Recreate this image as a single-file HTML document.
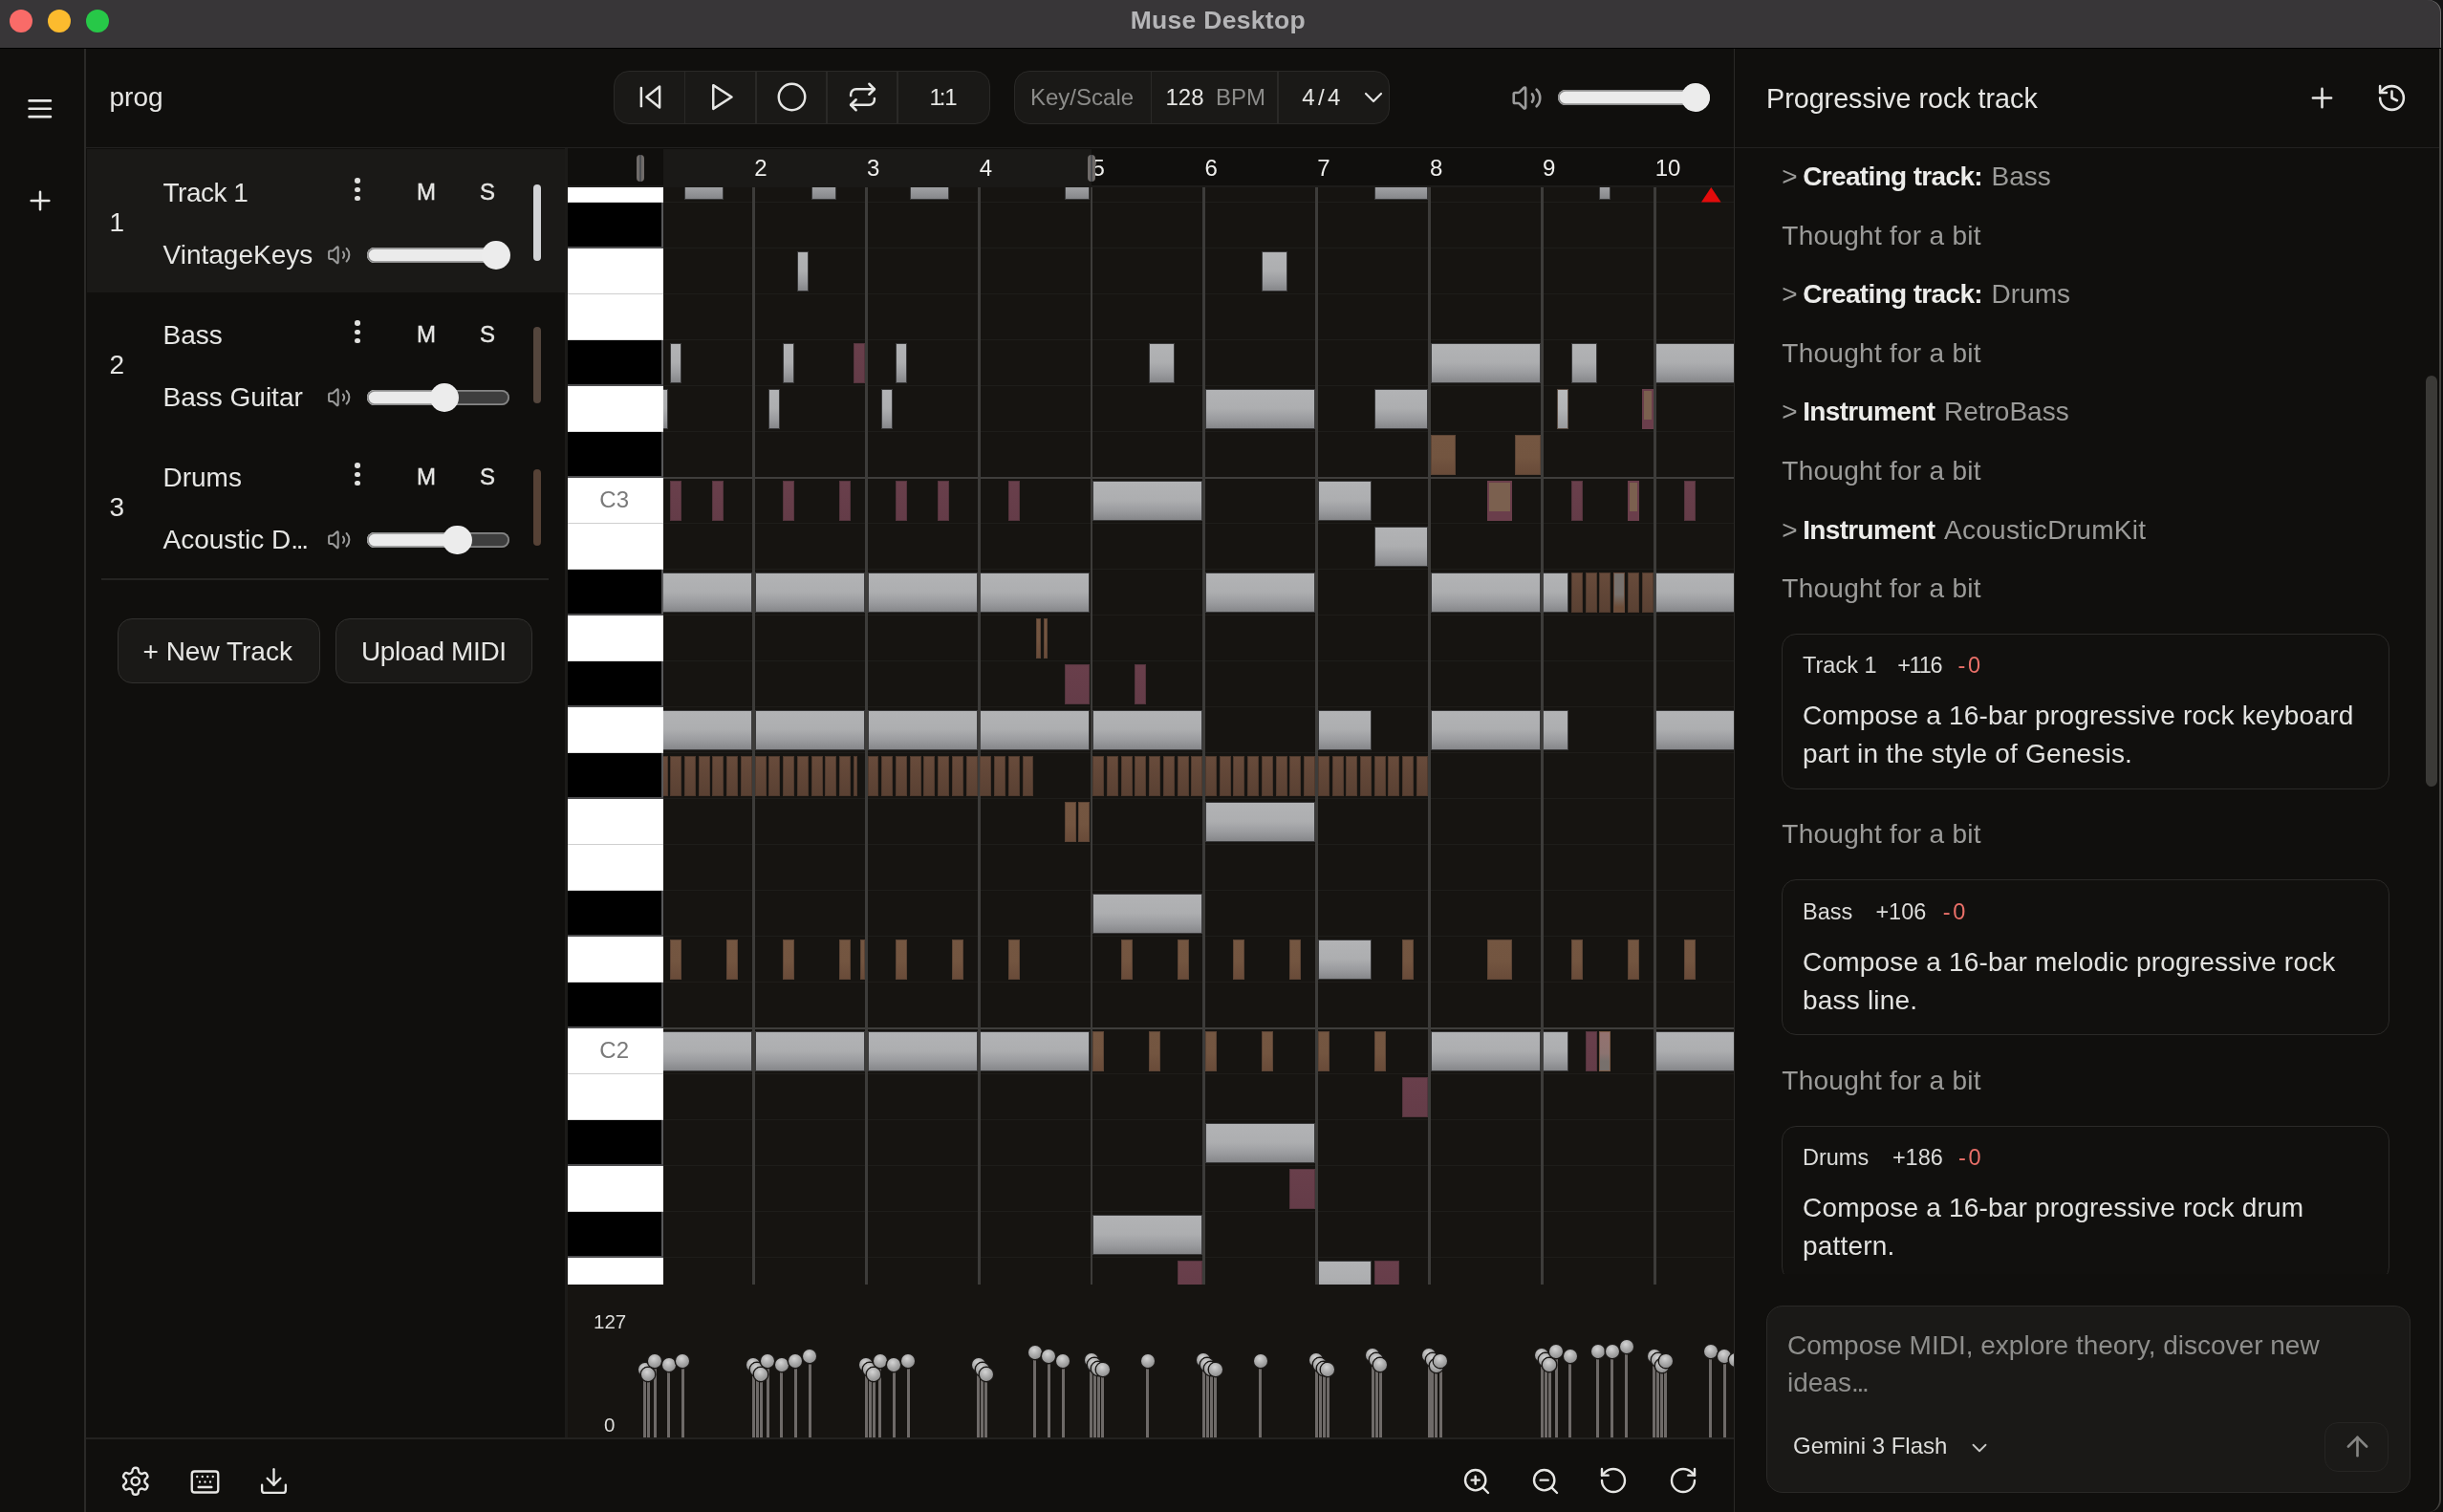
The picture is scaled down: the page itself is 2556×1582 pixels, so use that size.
<!DOCTYPE html>
<html><head><meta charset="utf-8"><title>Muse Desktop</title>
<style>
html,body{margin:0;padding:0;}
body{width:2556px;height:1582px;overflow:hidden;background:#100f0d;font-family:"Liberation Sans", sans-serif;position:relative;}
div,svg{box-sizing:border-box;}
.n{position:absolute;height:39.3px;}
.g{background:linear-gradient(to bottom,#b2b3b5 0%,#adaeb0 48%,#9b9c9f 76%,#86878a 100%);box-shadow:0 0 0 1px rgba(70,70,72,.75);}
.m{background:linear-gradient(to bottom,#693f4b,#643c48);box-shadow:0 0 0 1px rgba(100,60,72,.8);}
.b{background:linear-gradient(to bottom,#684b3b,#5a4133);box-shadow:0 0 0 1px rgba(92,66,52,.8);}
.c{background:linear-gradient(to bottom,#775643,#684a3a);box-shadow:0 0 0 1px rgba(108,78,60,.8);}
.d{background:linear-gradient(to bottom,#745641 0%,#735540 55%,#694b39 100%);box-shadow:0 0 0 1px rgba(110,80,62,.8);}
.x{background:#7b604f;box-shadow:inset 0 0 0 1px #6a3e4b,inset 0 -9px 0 0 #6a3e4b,0 0 0 1px #6a3e4b;}
.l{background:linear-gradient(to bottom,#b9babc 0%,#b2b3b5 50%,#999a9d 100%);box-shadow:0 0 0 1px rgba(120,100,88,.7);}
.stem{position:absolute;width:3px;background:#6e6a68;}
.head{position:absolute;width:14px;height:14px;border-radius:50%;background:radial-gradient(circle at 42% 32%,#d4d4d4 0%,#adadad 42%,#7e7e7e 100%);box-shadow:0 0 0 1.5px #1a1816;}
</style></head><body><div id="app" style="position:absolute;left:0;top:0;width:2556px;height:1582px;will-change:transform;">

<div style="position:absolute;left:0.00px;top:0.00px;width:2556.00px;height:51.00px;background:#141414;"></div>
<div style="position:absolute;left:0.00px;top:0.00px;width:2554.00px;height:50.00px;background:#383638;border-top-right-radius:13px;box-shadow:inset -1px 0 0 #6e6c6c;"></div>
<div style="position:absolute;left:0.00px;top:49.70px;width:2554.00px;height:1.50px;background:#000;"></div>
<div style="position:absolute;left:9.80px;top:9.80px;width:24.20px;height:24.20px;border-radius:50%;background:#f96b68;"></div>
<div style="position:absolute;left:49.90px;top:9.80px;width:24.20px;height:24.20px;border-radius:50%;background:#fcbb2e;"></div>
<div style="position:absolute;left:89.90px;top:9.80px;width:24.20px;height:24.20px;border-radius:50%;background:#27c848;"></div>
<div style="position:absolute;top:7.57px;font-size:26.5px;line-height:26.5px;color:#b5b5b7;white-space:nowrap;font-weight:bold;letter-spacing:0.3px;left:974.30px;width:600px;text-align:center;">Muse Desktop</div>
<div style="position:absolute;left:88.20px;top:51.00px;width:1.40px;height:1531.00px;background:#2a2927;"></div>
<svg style="position:absolute;left:25.25px;top:97.25px" width="33.5" height="33.5" viewBox="0 0 24 24" fill="none" stroke="#e6e6e4" stroke-width="1.9" stroke-linecap="round" stroke-linejoin="round"><path d="M4 12h16M4 6h16M4 18h16"/></svg>
<svg style="position:absolute;left:26.00px;top:194.40px" width="32" height="32" viewBox="0 0 24 24" fill="none" stroke="#e6e6e4" stroke-width="1.9" stroke-linecap="round" stroke-linejoin="round"><path d="M5 12h14M12 5v14"/></svg>
<div style="position:absolute;left:90.00px;top:153.50px;width:1724.00px;height:1.50px;background:#222120;"></div>
<div style="position:absolute;top:88.30px;font-size:28px;line-height:28px;color:#e6e6e4;white-space:nowrap;left:114.50px;">prog</div>
<div style="position:absolute;left:642.00px;top:74.00px;width:394.00px;height:56.00px;background:#1a1917;border:1.5px solid #2a2927;border-radius:16px;"></div>
<div style="position:absolute;left:715.75px;top:75.00px;width:1.50px;height:54.00px;background:#2a2927;"></div>
<div style="position:absolute;left:790.25px;top:75.00px;width:1.50px;height:54.00px;background:#2a2927;"></div>
<div style="position:absolute;left:864.25px;top:75.00px;width:1.50px;height:54.00px;background:#2a2927;"></div>
<div style="position:absolute;left:938.25px;top:75.00px;width:1.50px;height:54.00px;background:#2a2927;"></div>
<svg style="position:absolute;left:663.50px;top:85.10px" width="33" height="33" viewBox="0 0 24 24" fill="none" stroke="#e6e6e4" stroke-width="1.8" stroke-linecap="round" stroke-linejoin="round"><polygon points="19 20 9 12 19 4 19 20"/><line x1="5" x2="5" y1="19" y2="5"/></svg>
<svg style="position:absolute;left:737.50px;top:85.10px" width="33" height="33" viewBox="0 0 24 24" fill="none" stroke="#e6e6e4" stroke-width="1.8" stroke-linecap="round" stroke-linejoin="round"><polygon points="6 3 20 12 6 21 6 3"/></svg>
<svg style="position:absolute;left:811.50px;top:85.10px" width="33" height="33" viewBox="0 0 24 24" fill="none" stroke="#e6e6e4" stroke-width="1.8" stroke-linecap="round" stroke-linejoin="round"><circle cx="12" cy="12" r="10"/></svg>
<svg style="position:absolute;left:885.50px;top:85.10px" width="33" height="33" viewBox="0 0 24 24" fill="none" stroke="#e6e6e4" stroke-width="1.8" stroke-linecap="round" stroke-linejoin="round"><path d="m17 2 4 4-4 4"/><path d="M3 11v-1a4 4 0 0 1 4-4h14"/><path d="m7 22-4-4 4-4"/><path d="M21 13v1a4 4 0 0 1-4 4H3"/></svg>
<div style="position:absolute;top:89.68px;font-size:24px;line-height:24px;color:#e6e6e4;white-space:nowrap;left:972.60px;"><span style="letter-spacing:-3.1px">1</span><span style="letter-spacing:-1.2px">:</span>1</div>
<div style="position:absolute;left:1060.50px;top:74.00px;width:393.50px;height:56.00px;background:#1a1917;border:1.5px solid #2a2927;border-radius:16px;"></div>
<div style="position:absolute;left:1203.75px;top:75.00px;width:1.50px;height:54.00px;background:#2a2927;"></div>
<div style="position:absolute;left:1336.25px;top:75.00px;width:1.50px;height:54.00px;background:#2a2927;"></div>
<div style="position:absolute;top:89.68px;font-size:24px;line-height:24px;color:#8c8c8a;white-space:nowrap;left:1078.00px;">Key/Scale</div>
<div style="position:absolute;top:89.68px;font-size:24px;line-height:24px;color:#e6e6e4;white-space:nowrap;left:1219.50px;">128</div>
<div style="position:absolute;top:89.68px;font-size:24px;line-height:24px;color:#8c8c8a;white-space:nowrap;left:1272.00px;">BPM</div>
<div style="position:absolute;top:89.68px;font-size:24px;line-height:24px;color:#e6e6e4;white-space:nowrap;letter-spacing:3.4px;left:1362.30px;">4/4</div>
<svg style="position:absolute;left:1420.60px;top:86.00px" width="32" height="32" viewBox="0 0 24 24" fill="none" stroke="#e6e6e4" stroke-width="1.6" stroke-linecap="round" stroke-linejoin="round"><path d="m6 9 6 6 6-6"/></svg>
<svg style="position:absolute;left:1580.50px;top:85.50px" width="33" height="33" viewBox="0 0 24 24" fill="none" stroke="#9b9b9b" stroke-width="1.9" stroke-linecap="round" stroke-linejoin="round"><path d="M11 4.702a.705.705 0 0 0-1.203-.498L6.413 7.587A1.4 1.4 0 0 1 5.416 8H3a1 1 0 0 0-1 1v6a1 1 0 0 0 1 1h2.416a1.4 1.4 0 0 1 .997.413l3.383 3.384A.705.705 0 0 0 11 19.298z"/><path d="M16 9a5 5 0 0 1 0 6"/><path d="M19.364 18.364a9 9 0 0 0 0-12.728"/></svg>
<div style="position:absolute;left:1630.00px;top:94.00px;width:158.50px;height:16.20px;background:#ebebeb;border-radius:8.1px;box-shadow:inset 0 0 0 1.8px #8e8e8e;"></div>
<div style="position:absolute;left:1758.70px;top:86.90px;width:30.40px;height:30.40px;background:#ececec;border-radius:50%;"></div>
<div style="position:absolute;left:90.50px;top:156.00px;width:500.50px;height:149.50px;background:#1a1917;"></div>
<div style="position:absolute;left:591.00px;top:155.00px;width:3.00px;height:1350.00px;background:#1c1b19;"></div>
<div style="position:absolute;top:219.30px;font-size:28px;line-height:28px;color:#e6e6e4;white-space:nowrap;left:114.60px;">1</div>
<div style="position:absolute;top:187.50px;font-size:28px;line-height:28px;color:#e6e6e4;white-space:nowrap;letter-spacing:-0.5px;left:170.50px;">Track 1</div>
<div style="position:absolute;top:253.10px;font-size:28px;line-height:28px;color:#e6e6e4;white-space:nowrap;left:170.50px;">VintageKeys</div>
<div style="position:absolute;left:371.40px;top:186.30px;width:5.60px;height:5.60px;border-radius:50%;background:#e0e0de;"></div>
<div style="position:absolute;left:371.40px;top:195.50px;width:5.60px;height:5.60px;border-radius:50%;background:#e0e0de;"></div>
<div style="position:absolute;left:371.40px;top:204.70px;width:5.60px;height:5.60px;border-radius:50%;background:#e0e0de;"></div>
<div style="position:absolute;top:188.68px;font-size:24px;line-height:24px;color:#e6e6e4;white-space:nowrap;left:436.00px;-webkit-text-stroke:0.45px #e6e6e4;">M</div>
<div style="position:absolute;top:188.68px;font-size:24px;line-height:24px;color:#e6e6e4;white-space:nowrap;left:502.00px;-webkit-text-stroke:0.45px #e6e6e4;">S</div>
<div style="position:absolute;left:558.00px;top:193.00px;width:8.00px;height:80.00px;background:#d2d3d6;border-radius:4px;"></div>
<svg style="position:absolute;left:341.65px;top:254.25px" width="25.5" height="25.5" viewBox="0 0 24 24" fill="none" stroke="#9b9b9b" stroke-width="1.9" stroke-linecap="round" stroke-linejoin="round"><path d="M11 4.702a.705.705 0 0 0-1.203-.498L6.413 7.587A1.4 1.4 0 0 1 5.416 8H3a1 1 0 0 0-1 1v6a1 1 0 0 0 1 1h2.416a1.4 1.4 0 0 1 .997.413l3.383 3.384A.705.705 0 0 0 11 19.298z"/><path d="M16 9a5 5 0 0 1 0 6"/><path d="M19.364 18.364a9 9 0 0 0 0-12.728"/></svg>
<div style="position:absolute;left:384.00px;top:258.90px;width:149.20px;height:16.20px;background:#3e3e3e;border-radius:8.1px;box-shadow:inset 0 0 0 1.8px #868686;"></div>
<div style="position:absolute;left:384.00px;top:258.90px;width:134.30px;height:16.20px;background:#ebebeb;border-radius:8.1px 0 0 8.1px;box-shadow:inset 0 0 0 1.8px #8e8e8e;"></div>
<div style="position:absolute;left:503.60px;top:251.80px;width:30.40px;height:30.40px;background:#ececec;border-radius:50%;"></div>
<div style="position:absolute;top:368.30px;font-size:28px;line-height:28px;color:#e6e6e4;white-space:nowrap;left:114.60px;">2</div>
<div style="position:absolute;top:336.50px;font-size:28px;line-height:28px;color:#e6e6e4;white-space:nowrap;letter-spacing:0px;left:170.50px;">Bass</div>
<div style="position:absolute;top:402.10px;font-size:28px;line-height:28px;color:#e6e6e4;white-space:nowrap;left:170.50px;">Bass Guitar</div>
<div style="position:absolute;left:371.40px;top:335.30px;width:5.60px;height:5.60px;border-radius:50%;background:#e0e0de;"></div>
<div style="position:absolute;left:371.40px;top:344.50px;width:5.60px;height:5.60px;border-radius:50%;background:#e0e0de;"></div>
<div style="position:absolute;left:371.40px;top:353.70px;width:5.60px;height:5.60px;border-radius:50%;background:#e0e0de;"></div>
<div style="position:absolute;top:337.68px;font-size:24px;line-height:24px;color:#e6e6e4;white-space:nowrap;left:436.00px;-webkit-text-stroke:0.45px #e6e6e4;">M</div>
<div style="position:absolute;top:337.68px;font-size:24px;line-height:24px;color:#e6e6e4;white-space:nowrap;left:502.00px;-webkit-text-stroke:0.45px #e6e6e4;">S</div>
<div style="position:absolute;left:558.00px;top:342.00px;width:8.00px;height:80.00px;background:#54463d;border-radius:4px;"></div>
<svg style="position:absolute;left:341.65px;top:403.25px" width="25.5" height="25.5" viewBox="0 0 24 24" fill="none" stroke="#9b9b9b" stroke-width="1.9" stroke-linecap="round" stroke-linejoin="round"><path d="M11 4.702a.705.705 0 0 0-1.203-.498L6.413 7.587A1.4 1.4 0 0 1 5.416 8H3a1 1 0 0 0-1 1v6a1 1 0 0 0 1 1h2.416a1.4 1.4 0 0 1 .997.413l3.383 3.384A.705.705 0 0 0 11 19.298z"/><path d="M16 9a5 5 0 0 1 0 6"/><path d="M19.364 18.364a9 9 0 0 0 0-12.728"/></svg>
<div style="position:absolute;left:384.00px;top:407.90px;width:149.20px;height:16.20px;background:#3e3e3e;border-radius:8.1px;box-shadow:inset 0 0 0 1.8px #868686;"></div>
<div style="position:absolute;left:384.00px;top:407.90px;width:80.80px;height:16.20px;background:#ebebeb;border-radius:8.1px 0 0 8.1px;box-shadow:inset 0 0 0 1.8px #8e8e8e;"></div>
<div style="position:absolute;left:450.10px;top:400.80px;width:30.40px;height:30.40px;background:#ececec;border-radius:50%;"></div>
<div style="position:absolute;top:517.30px;font-size:28px;line-height:28px;color:#e6e6e4;white-space:nowrap;left:114.60px;">3</div>
<div style="position:absolute;top:485.50px;font-size:28px;line-height:28px;color:#e6e6e4;white-space:nowrap;letter-spacing:0px;left:170.50px;">Drums</div>
<div style="position:absolute;top:551.10px;font-size:28px;line-height:28px;color:#e6e6e4;white-space:nowrap;left:170.50px;">Acoustic D<span style="letter-spacing:-2.3px">...</span></div>
<div style="position:absolute;left:371.40px;top:484.30px;width:5.60px;height:5.60px;border-radius:50%;background:#e0e0de;"></div>
<div style="position:absolute;left:371.40px;top:493.50px;width:5.60px;height:5.60px;border-radius:50%;background:#e0e0de;"></div>
<div style="position:absolute;left:371.40px;top:502.70px;width:5.60px;height:5.60px;border-radius:50%;background:#e0e0de;"></div>
<div style="position:absolute;top:486.68px;font-size:24px;line-height:24px;color:#e6e6e4;white-space:nowrap;left:436.00px;-webkit-text-stroke:0.45px #e6e6e4;">M</div>
<div style="position:absolute;top:486.68px;font-size:24px;line-height:24px;color:#e6e6e4;white-space:nowrap;left:502.00px;-webkit-text-stroke:0.45px #e6e6e4;">S</div>
<div style="position:absolute;left:558.00px;top:491.00px;width:8.00px;height:80.00px;background:#564236;border-radius:4px;"></div>
<svg style="position:absolute;left:341.65px;top:552.25px" width="25.5" height="25.5" viewBox="0 0 24 24" fill="none" stroke="#9b9b9b" stroke-width="1.9" stroke-linecap="round" stroke-linejoin="round"><path d="M11 4.702a.705.705 0 0 0-1.203-.498L6.413 7.587A1.4 1.4 0 0 1 5.416 8H3a1 1 0 0 0-1 1v6a1 1 0 0 0 1 1h2.416a1.4 1.4 0 0 1 .997.413l3.383 3.384A.705.705 0 0 0 11 19.298z"/><path d="M16 9a5 5 0 0 1 0 6"/><path d="M19.364 18.364a9 9 0 0 0 0-12.728"/></svg>
<div style="position:absolute;left:384.00px;top:556.90px;width:149.20px;height:16.20px;background:#3e3e3e;border-radius:8.1px;box-shadow:inset 0 0 0 1.8px #868686;"></div>
<div style="position:absolute;left:384.00px;top:556.90px;width:93.90px;height:16.20px;background:#ebebeb;border-radius:8.1px 0 0 8.1px;box-shadow:inset 0 0 0 1.8px #8e8e8e;"></div>
<div style="position:absolute;left:463.20px;top:549.80px;width:30.40px;height:30.40px;background:#ececec;border-radius:50%;"></div>
<div style="position:absolute;left:106.00px;top:605.30px;width:468.00px;height:1.50px;background:#252422;"></div>
<div style="position:absolute;left:123.00px;top:647.00px;width:212.00px;height:68.00px;background:#1a1917;border:1.5px solid #32312f;border-radius:15px;"></div>
<div style="position:absolute;top:668.30px;font-size:28px;line-height:28px;color:#e6e6e4;white-space:nowrap;left:149.50px;">+ New Track</div>
<div style="position:absolute;left:351.00px;top:647.00px;width:206.00px;height:68.00px;background:#1a1917;border:1.5px solid #32312f;border-radius:15px;"></div>
<div style="position:absolute;top:668.30px;font-size:28px;line-height:28px;color:#e6e6e4;white-space:nowrap;letter-spacing:-0.35px;left:378.00px;">Upload MIDI</div>
<div style="position:absolute;left:594.00px;top:155.00px;width:1220.00px;height:41.00px;background:#100f0d;"></div>
<div style="position:absolute;left:594.00px;top:194.30px;width:1220.00px;height:1.70px;background:#1d1c1a;"></div>
<div style="position:absolute;left:694.00px;top:156.00px;width:447.97px;height:40.00px;background:#1a1917;"></div>
<div style="position:absolute;top:163.98px;font-size:24px;line-height:24px;color:#efefed;white-space:nowrap;left:789.13px;">2</div>
<div style="position:absolute;top:163.98px;font-size:24px;line-height:24px;color:#efefed;white-space:nowrap;left:906.96px;">3</div>
<div style="position:absolute;top:163.98px;font-size:24px;line-height:24px;color:#efefed;white-space:nowrap;left:1024.79px;">4</div>
<div style="position:absolute;top:163.98px;font-size:24px;line-height:24px;color:#efefed;white-space:nowrap;left:1142.62px;">5</div>
<div style="position:absolute;top:163.98px;font-size:24px;line-height:24px;color:#efefed;white-space:nowrap;left:1260.45px;">6</div>
<div style="position:absolute;top:163.98px;font-size:24px;line-height:24px;color:#efefed;white-space:nowrap;left:1378.28px;">7</div>
<div style="position:absolute;top:163.98px;font-size:24px;line-height:24px;color:#efefed;white-space:nowrap;left:1496.11px;">8</div>
<div style="position:absolute;top:163.98px;font-size:24px;line-height:24px;color:#efefed;white-space:nowrap;left:1613.94px;">9</div>
<div style="position:absolute;top:163.98px;font-size:24px;line-height:24px;color:#efefed;white-space:nowrap;left:1731.77px;">10</div>
<div style="position:absolute;left:665.80px;top:161.80px;width:8.20px;height:28.40px;background:linear-gradient(to right,#6f6b69 0%,#6f6b69 36%,#4c4e52 40%,#4c4e52 58%,#6f6b69 62%,#6f6b69 100%);border-radius:4.1px;"></div>
<div style="position:absolute;left:1137.90px;top:161.80px;width:8.20px;height:28.40px;background:linear-gradient(to right,#6f6b69 0%,#6f6b69 36%,#4c4e52 40%,#4c4e52 58%,#6f6b69 62%,#6f6b69 100%);border-radius:4.1px;"></div>
<div style="position:absolute;left:594px;top:196px;width:1219.5px;height:1148px;overflow:hidden;background:#161411;">
<div style="position:absolute;left:100.00px;top:-33.30px;width:1220.00px;height:1.80px;background:#1e1d1a;"></div>
<div style="position:absolute;left:100.00px;top:14.70px;width:1220.00px;height:1.80px;background:#1e1d1a;"></div>
<div style="position:absolute;left:100.00px;top:62.70px;width:1220.00px;height:1.80px;background:#1e1d1a;"></div>
<div style="position:absolute;left:100.00px;top:110.70px;width:1220.00px;height:1.80px;background:#1e1d1a;"></div>
<div style="position:absolute;left:100.00px;top:158.70px;width:1220.00px;height:1.80px;background:#1e1d1a;"></div>
<div style="position:absolute;left:100.00px;top:206.70px;width:1220.00px;height:1.80px;background:#1e1d1a;"></div>
<div style="position:absolute;left:100.00px;top:254.70px;width:1220.00px;height:1.80px;background:#1e1d1a;"></div>
<div style="position:absolute;left:100.00px;top:303.20px;width:1220.00px;height:2.20px;background:#3f3e3c;"></div>
<div style="position:absolute;left:100.00px;top:350.70px;width:1220.00px;height:1.80px;background:#1e1d1a;"></div>
<div style="position:absolute;left:100.00px;top:398.70px;width:1220.00px;height:1.80px;background:#1e1d1a;"></div>
<div style="position:absolute;left:100.00px;top:446.70px;width:1220.00px;height:1.80px;background:#1e1d1a;"></div>
<div style="position:absolute;left:100.00px;top:494.70px;width:1220.00px;height:1.80px;background:#1e1d1a;"></div>
<div style="position:absolute;left:100.00px;top:542.70px;width:1220.00px;height:1.80px;background:#1e1d1a;"></div>
<div style="position:absolute;left:100.00px;top:590.70px;width:1220.00px;height:1.80px;background:#1e1d1a;"></div>
<div style="position:absolute;left:100.00px;top:638.70px;width:1220.00px;height:1.80px;background:#1e1d1a;"></div>
<div style="position:absolute;left:100.00px;top:686.70px;width:1220.00px;height:1.80px;background:#1e1d1a;"></div>
<div style="position:absolute;left:100.00px;top:734.70px;width:1220.00px;height:1.80px;background:#1e1d1a;"></div>
<div style="position:absolute;left:100.00px;top:782.70px;width:1220.00px;height:1.80px;background:#1e1d1a;"></div>
<div style="position:absolute;left:100.00px;top:830.70px;width:1220.00px;height:1.80px;background:#1e1d1a;"></div>
<div style="position:absolute;left:100.00px;top:879.20px;width:1220.00px;height:2.20px;background:#3f3e3c;"></div>
<div style="position:absolute;left:100.00px;top:926.70px;width:1220.00px;height:1.80px;background:#1e1d1a;"></div>
<div style="position:absolute;left:100.00px;top:974.70px;width:1220.00px;height:1.80px;background:#1e1d1a;"></div>
<div style="position:absolute;left:100.00px;top:1022.70px;width:1220.00px;height:1.80px;background:#1e1d1a;"></div>
<div style="position:absolute;left:100.00px;top:1070.70px;width:1220.00px;height:1.80px;background:#1e1d1a;"></div>
<div style="position:absolute;left:100.00px;top:1118.70px;width:1220.00px;height:1.80px;background:#1e1d1a;"></div>
<div style="position:absolute;left:100.00px;top:1166.70px;width:1220.00px;height:1.80px;background:#1e1d1a;"></div>
<div style="position:absolute;left:193.08px;top:0.00px;width:2.80px;height:1148.00px;background:#3d3c3a;"></div>
<div style="position:absolute;left:310.91px;top:0.00px;width:2.80px;height:1148.00px;background:#3d3c3a;"></div>
<div style="position:absolute;left:428.74px;top:0.00px;width:2.80px;height:1148.00px;background:#3d3c3a;"></div>
<div style="position:absolute;left:546.57px;top:0.00px;width:2.80px;height:1148.00px;background:#3d3c3a;"></div>
<div style="position:absolute;left:664.40px;top:0.00px;width:2.80px;height:1148.00px;background:#3d3c3a;"></div>
<div style="position:absolute;left:782.23px;top:0.00px;width:2.80px;height:1148.00px;background:#3d3c3a;"></div>
<div style="position:absolute;left:900.06px;top:0.00px;width:2.80px;height:1148.00px;background:#3d3c3a;"></div>
<div style="position:absolute;left:1017.89px;top:0.00px;width:2.80px;height:1148.00px;background:#3d3c3a;"></div>
<div style="position:absolute;left:1135.72px;top:0.00px;width:2.80px;height:1148.00px;background:#3d3c3a;"></div>
<div class="n g" style="left:123.04px;top:-27.60px;width:39.44px;"></div>
<div class="n g" style="left:255.60px;top:-27.60px;width:24.71px;"></div>
<div class="n g" style="left:358.70px;top:-27.60px;width:39.44px;"></div>
<div class="n g" style="left:520.71px;top:-27.60px;width:24.71px;"></div>
<div class="n g" style="left:844.75px;top:-27.60px;width:54.16px;"></div>
<div class="n g" style="left:1080.40px;top:-27.60px;width:9.98px;"></div>
<div class="n g" style="left:240.87px;top:68.40px;width:9.98px;"></div>
<div class="n g" style="left:726.91px;top:68.40px;width:24.71px;"></div>
<div class="n g" style="left:108.31px;top:164.40px;width:9.98px;"></div>
<div class="n g" style="left:226.14px;top:164.40px;width:9.98px;"></div>
<div class="n g" style="left:343.97px;top:164.40px;width:9.98px;"></div>
<div class="n g" style="left:609.09px;top:164.40px;width:24.71px;"></div>
<div class="n g" style="left:903.66px;top:164.40px;width:113.08px;"></div>
<div class="n g" style="left:1050.95px;top:164.40px;width:24.71px;"></div>
<div class="n g" style="left:1139.32px;top:164.40px;width:113.08px;"></div>
<div class="n m" style="left:299.78px;top:164.40px;width:9.98px;"></div>
<div class="n g" style="left:93.58px;top:212.40px;width:9.98px;"></div>
<div class="n g" style="left:211.41px;top:212.40px;width:9.98px;"></div>
<div class="n g" style="left:329.24px;top:212.40px;width:9.98px;"></div>
<div class="n g" style="left:668.00px;top:212.40px;width:113.08px;"></div>
<div class="n g" style="left:844.75px;top:212.40px;width:54.16px;"></div>
<div class="n l" style="left:1036.22px;top:212.40px;width:9.98px;"></div>
<div class="n x" style="left:1124.59px;top:212.40px;width:9.98px;"></div>
<div class="n d" style="left:903.66px;top:260.40px;width:24.71px;"></div>
<div class="n d" style="left:992.03px;top:260.40px;width:24.71px;"></div>
<div class="n m" style="left:108.31px;top:308.40px;width:9.98px;"></div>
<div class="n m" style="left:152.49px;top:308.40px;width:9.98px;"></div>
<div class="n m" style="left:226.14px;top:308.40px;width:9.98px;"></div>
<div class="n m" style="left:285.05px;top:308.40px;width:9.98px;"></div>
<div class="n m" style="left:343.97px;top:308.40px;width:9.98px;"></div>
<div class="n m" style="left:388.15px;top:308.40px;width:9.98px;"></div>
<div class="n m" style="left:461.80px;top:308.40px;width:9.98px;"></div>
<div class="n m" style="left:1050.95px;top:308.40px;width:9.98px;"></div>
<div class="n m" style="left:1168.78px;top:308.40px;width:9.98px;"></div>
<div class="n g" style="left:550.17px;top:308.40px;width:113.08px;"></div>
<div class="n g" style="left:785.83px;top:308.40px;width:54.16px;"></div>
<div class="n x" style="left:962.58px;top:308.40px;width:24.71px;"></div>
<div class="n x" style="left:1109.86px;top:308.40px;width:9.98px;"></div>
<div class="n g" style="left:844.75px;top:356.40px;width:54.16px;"></div>
<div class="n g" style="left:78.85px;top:404.40px;width:113.08px;"></div>
<div class="n g" style="left:196.68px;top:404.40px;width:113.08px;"></div>
<div class="n g" style="left:314.51px;top:404.40px;width:113.08px;"></div>
<div class="n g" style="left:432.34px;top:404.40px;width:113.08px;"></div>
<div class="n g" style="left:668.00px;top:404.40px;width:113.08px;"></div>
<div class="n g" style="left:903.66px;top:404.40px;width:113.08px;"></div>
<div class="n g" style="left:1139.32px;top:404.40px;width:113.08px;"></div>
<div class="n g" style="left:1021.49px;top:404.40px;width:24.71px;"></div>
<div class="n b" style="left:1050.95px;top:404.40px;width:9.98px;"></div>
<div class="n b" style="left:1065.68px;top:404.40px;width:9.98px;"></div>
<div class="n b" style="left:1080.40px;top:404.40px;width:9.98px;"></div>
<div class="n b" style="left:1109.86px;top:404.40px;width:9.98px;"></div>
<div class="n b" style="left:1124.59px;top:404.40px;width:9.98px;"></div>
<div class="n" style="left:1095.13px;top:404.40px;width:9.98px;background:linear-gradient(to bottom,#77716d 0%,#77716d 55%,#6c4d39 88%);box-shadow:0 0 0 1px #66493a;"></div>
<div class="n d" style="left:491.25px;top:452.40px;width:2.61px;"></div>
<div class="n d" style="left:498.62px;top:452.40px;width:2.61px;"></div>
<div class="n m" style="left:520.71px;top:500.40px;width:24.71px;"></div>
<div class="n m" style="left:594.36px;top:500.40px;width:9.98px;"></div>
<div class="n g" style="left:78.85px;top:548.40px;width:113.08px;"></div>
<div class="n g" style="left:196.68px;top:548.40px;width:113.08px;"></div>
<div class="n g" style="left:314.51px;top:548.40px;width:113.08px;"></div>
<div class="n g" style="left:432.34px;top:548.40px;width:113.08px;"></div>
<div class="n g" style="left:550.17px;top:548.40px;width:113.08px;"></div>
<div class="n g" style="left:903.66px;top:548.40px;width:113.08px;"></div>
<div class="n g" style="left:1139.32px;top:548.40px;width:113.08px;"></div>
<div class="n g" style="left:785.83px;top:548.40px;width:54.16px;"></div>
<div class="n g" style="left:1021.49px;top:548.40px;width:24.71px;"></div>
<div class="n b" style="left:78.85px;top:596.40px;width:9.98px;"></div>
<div class="n b" style="left:93.58px;top:596.40px;width:9.98px;"></div>
<div class="n b" style="left:108.31px;top:596.40px;width:9.98px;"></div>
<div class="n b" style="left:123.04px;top:596.40px;width:9.98px;"></div>
<div class="n b" style="left:137.76px;top:596.40px;width:9.98px;"></div>
<div class="n b" style="left:152.49px;top:596.40px;width:9.98px;"></div>
<div class="n b" style="left:167.22px;top:596.40px;width:9.98px;"></div>
<div class="n b" style="left:181.95px;top:596.40px;width:9.98px;"></div>
<div class="n b" style="left:196.68px;top:596.40px;width:9.98px;"></div>
<div class="n b" style="left:211.41px;top:596.40px;width:9.98px;"></div>
<div class="n b" style="left:226.14px;top:596.40px;width:9.98px;"></div>
<div class="n b" style="left:240.87px;top:596.40px;width:9.98px;"></div>
<div class="n b" style="left:255.60px;top:596.40px;width:9.98px;"></div>
<div class="n b" style="left:270.32px;top:596.40px;width:9.98px;"></div>
<div class="n b" style="left:285.05px;top:596.40px;width:9.98px;"></div>
<div class="n b" style="left:314.51px;top:596.40px;width:9.98px;"></div>
<div class="n b" style="left:329.24px;top:596.40px;width:9.98px;"></div>
<div class="n b" style="left:343.97px;top:596.40px;width:9.98px;"></div>
<div class="n b" style="left:358.70px;top:596.40px;width:9.98px;"></div>
<div class="n b" style="left:373.42px;top:596.40px;width:9.98px;"></div>
<div class="n b" style="left:388.15px;top:596.40px;width:9.98px;"></div>
<div class="n b" style="left:402.88px;top:596.40px;width:9.98px;"></div>
<div class="n b" style="left:417.61px;top:596.40px;width:9.98px;"></div>
<div class="n b" style="left:432.34px;top:596.40px;width:9.98px;"></div>
<div class="n b" style="left:447.07px;top:596.40px;width:9.98px;"></div>
<div class="n b" style="left:461.80px;top:596.40px;width:9.98px;"></div>
<div class="n b" style="left:476.53px;top:596.40px;width:9.98px;"></div>
<div class="n b" style="left:550.17px;top:596.40px;width:9.98px;"></div>
<div class="n b" style="left:564.90px;top:596.40px;width:9.98px;"></div>
<div class="n b" style="left:579.63px;top:596.40px;width:9.98px;"></div>
<div class="n b" style="left:594.36px;top:596.40px;width:9.98px;"></div>
<div class="n b" style="left:609.09px;top:596.40px;width:9.98px;"></div>
<div class="n b" style="left:623.81px;top:596.40px;width:9.98px;"></div>
<div class="n b" style="left:638.54px;top:596.40px;width:9.98px;"></div>
<div class="n b" style="left:653.27px;top:596.40px;width:9.98px;"></div>
<div class="n b" style="left:668.00px;top:596.40px;width:9.98px;"></div>
<div class="n b" style="left:682.73px;top:596.40px;width:9.98px;"></div>
<div class="n b" style="left:697.46px;top:596.40px;width:9.98px;"></div>
<div class="n b" style="left:712.19px;top:596.40px;width:9.98px;"></div>
<div class="n b" style="left:726.91px;top:596.40px;width:9.98px;"></div>
<div class="n b" style="left:741.64px;top:596.40px;width:9.98px;"></div>
<div class="n b" style="left:756.37px;top:596.40px;width:9.98px;"></div>
<div class="n b" style="left:771.10px;top:596.40px;width:9.98px;"></div>
<div class="n b" style="left:785.83px;top:596.40px;width:9.98px;"></div>
<div class="n b" style="left:800.56px;top:596.40px;width:9.98px;"></div>
<div class="n b" style="left:815.29px;top:596.40px;width:9.98px;"></div>
<div class="n b" style="left:830.02px;top:596.40px;width:9.98px;"></div>
<div class="n b" style="left:844.75px;top:596.40px;width:9.98px;"></div>
<div class="n b" style="left:859.47px;top:596.40px;width:9.98px;"></div>
<div class="n b" style="left:874.20px;top:596.40px;width:9.98px;"></div>
<div class="n b" style="left:888.93px;top:596.40px;width:9.98px;"></div>
<div class="n b" style="left:299.78px;top:596.40px;width:2.61px;"></div>
<div class="n d" style="left:520.71px;top:644.40px;width:9.98px;"></div>
<div class="n d" style="left:535.44px;top:644.40px;width:9.98px;"></div>
<div class="n g" style="left:668.00px;top:644.40px;width:113.08px;"></div>
<div class="n g" style="left:550.17px;top:740.40px;width:113.08px;"></div>
<div class="n d" style="left:108.31px;top:788.40px;width:9.98px;"></div>
<div class="n d" style="left:167.22px;top:788.40px;width:9.98px;"></div>
<div class="n d" style="left:226.14px;top:788.40px;width:9.98px;"></div>
<div class="n d" style="left:285.05px;top:788.40px;width:9.98px;"></div>
<div class="n d" style="left:343.97px;top:788.40px;width:9.98px;"></div>
<div class="n d" style="left:402.88px;top:788.40px;width:9.98px;"></div>
<div class="n d" style="left:461.80px;top:788.40px;width:9.98px;"></div>
<div class="n d" style="left:579.63px;top:788.40px;width:9.98px;"></div>
<div class="n d" style="left:638.54px;top:788.40px;width:9.98px;"></div>
<div class="n d" style="left:697.46px;top:788.40px;width:9.98px;"></div>
<div class="n d" style="left:756.37px;top:788.40px;width:9.98px;"></div>
<div class="n d" style="left:874.20px;top:788.40px;width:9.98px;"></div>
<div class="n d" style="left:1050.95px;top:788.40px;width:9.98px;"></div>
<div class="n d" style="left:1109.86px;top:788.40px;width:9.98px;"></div>
<div class="n d" style="left:1168.78px;top:788.40px;width:9.98px;"></div>
<div class="n d" style="left:307.15px;top:788.40px;width:2.61px;"></div>
<div class="n g" style="left:785.83px;top:788.40px;width:54.16px;"></div>
<div class="n d" style="left:962.58px;top:788.40px;width:24.71px;"></div>
<div class="n g" style="left:78.85px;top:884.40px;width:113.08px;"></div>
<div class="n g" style="left:196.68px;top:884.40px;width:113.08px;"></div>
<div class="n g" style="left:314.51px;top:884.40px;width:113.08px;"></div>
<div class="n g" style="left:432.34px;top:884.40px;width:113.08px;"></div>
<div class="n g" style="left:903.66px;top:884.40px;width:113.08px;"></div>
<div class="n g" style="left:1139.32px;top:884.40px;width:113.08px;"></div>
<div class="n g" style="left:1021.49px;top:884.40px;width:24.71px;"></div>
<div class="n d" style="left:550.17px;top:884.40px;width:9.98px;"></div>
<div class="n d" style="left:609.09px;top:884.40px;width:9.98px;"></div>
<div class="n d" style="left:668.00px;top:884.40px;width:9.98px;"></div>
<div class="n d" style="left:726.91px;top:884.40px;width:9.98px;"></div>
<div class="n d" style="left:785.83px;top:884.40px;width:9.98px;"></div>
<div class="n d" style="left:844.75px;top:884.40px;width:9.98px;"></div>
<div class="n m" style="left:1065.68px;top:884.40px;width:9.98px;"></div>
<div class="n" style="left:1080.40px;top:884.40px;width:9.98px;background:linear-gradient(to bottom,#94726f 0%,#8c7370 55%,#78706c 75%,#77706c 100%);box-shadow:0 0 0 1px #7a5a45;"></div>
<div class="n m" style="left:874.20px;top:932.40px;width:24.71px;"></div>
<div class="n g" style="left:668.00px;top:980.40px;width:113.08px;"></div>
<div class="n m" style="left:756.37px;top:1028.40px;width:24.71px;"></div>
<div class="n g" style="left:550.17px;top:1076.40px;width:113.08px;"></div>
<div class="n m" style="left:638.54px;top:1124.40px;width:24.71px;"></div>
<div class="n g" style="left:785.83px;top:1124.40px;width:54.16px;"></div>
<div class="n m" style="left:844.75px;top:1124.40px;width:24.71px;"></div>
<svg style="position:absolute;left:1186px;top:0px" width="21" height="16" viewBox="0 0 21 16"><polygon points="10.3,0 20.6,15.6 0,15.6" fill="#e30b0b"/></svg>
<div style="position:absolute;left:0.00px;top:-32.50px;width:100.00px;height:48.00px;background:#fff;"></div>
<div style="position:absolute;left:0.00px;top:15.50px;width:100.00px;height:48.00px;background:#fff;"></div>
<div style="position:absolute;left:0.00px;top:16.00px;width:98.00px;height:46.20px;background:#000;"></div>
<div style="position:absolute;left:98.00px;top:16.00px;width:2.00px;height:47.50px;background:#58585a;"></div>
<div style="position:absolute;left:0.00px;top:62.10px;width:100.00px;height:1.80px;background:#4c4c4e;"></div>
<div style="position:absolute;left:0.00px;top:14.50px;width:100.00px;height:1.60px;background:#dcdcdc;"></div>
<div style="position:absolute;left:0.00px;top:63.50px;width:100.00px;height:48.00px;background:#fff;"></div>
<div style="position:absolute;left:0.00px;top:110.70px;width:100.00px;height:1.20px;background:#cfcfcf;"></div>
<div style="position:absolute;left:0.00px;top:111.50px;width:100.00px;height:48.00px;background:#fff;"></div>
<div style="position:absolute;left:0.00px;top:159.50px;width:100.00px;height:48.00px;background:#fff;"></div>
<div style="position:absolute;left:0.00px;top:160.00px;width:98.00px;height:46.20px;background:#000;"></div>
<div style="position:absolute;left:98.00px;top:160.00px;width:2.00px;height:47.50px;background:#58585a;"></div>
<div style="position:absolute;left:0.00px;top:206.10px;width:100.00px;height:1.80px;background:#4c4c4e;"></div>
<div style="position:absolute;left:0.00px;top:158.50px;width:100.00px;height:1.60px;background:#dcdcdc;"></div>
<div style="position:absolute;left:0.00px;top:207.50px;width:100.00px;height:48.00px;background:#fff;"></div>
<div style="position:absolute;left:0.00px;top:255.50px;width:100.00px;height:48.00px;background:#fff;"></div>
<div style="position:absolute;left:0.00px;top:256.00px;width:98.00px;height:46.20px;background:#000;"></div>
<div style="position:absolute;left:98.00px;top:256.00px;width:2.00px;height:47.50px;background:#58585a;"></div>
<div style="position:absolute;left:0.00px;top:302.10px;width:100.00px;height:1.80px;background:#4c4c4e;"></div>
<div style="position:absolute;left:0.00px;top:254.50px;width:100.00px;height:1.60px;background:#dcdcdc;"></div>
<div style="position:absolute;left:0.00px;top:303.50px;width:100.00px;height:48.00px;background:#fff;"></div>
<div style="position:absolute;left:0.00px;top:350.70px;width:100.00px;height:1.20px;background:#cfcfcf;"></div>
<div style="position:absolute;left:0.00px;top:351.50px;width:100.00px;height:48.00px;background:#fff;"></div>
<div style="position:absolute;left:0.00px;top:399.50px;width:100.00px;height:48.00px;background:#fff;"></div>
<div style="position:absolute;left:0.00px;top:400.00px;width:98.00px;height:46.20px;background:#000;"></div>
<div style="position:absolute;left:98.00px;top:400.00px;width:2.00px;height:47.50px;background:#58585a;"></div>
<div style="position:absolute;left:0.00px;top:446.10px;width:100.00px;height:1.80px;background:#4c4c4e;"></div>
<div style="position:absolute;left:0.00px;top:398.50px;width:100.00px;height:1.60px;background:#dcdcdc;"></div>
<div style="position:absolute;left:0.00px;top:447.50px;width:100.00px;height:48.00px;background:#fff;"></div>
<div style="position:absolute;left:0.00px;top:495.50px;width:100.00px;height:48.00px;background:#fff;"></div>
<div style="position:absolute;left:0.00px;top:496.00px;width:98.00px;height:46.20px;background:#000;"></div>
<div style="position:absolute;left:98.00px;top:496.00px;width:2.00px;height:47.50px;background:#58585a;"></div>
<div style="position:absolute;left:0.00px;top:542.10px;width:100.00px;height:1.80px;background:#4c4c4e;"></div>
<div style="position:absolute;left:0.00px;top:494.50px;width:100.00px;height:1.60px;background:#dcdcdc;"></div>
<div style="position:absolute;left:0.00px;top:543.50px;width:100.00px;height:48.00px;background:#fff;"></div>
<div style="position:absolute;left:0.00px;top:591.50px;width:100.00px;height:48.00px;background:#fff;"></div>
<div style="position:absolute;left:0.00px;top:592.00px;width:98.00px;height:46.20px;background:#000;"></div>
<div style="position:absolute;left:98.00px;top:592.00px;width:2.00px;height:47.50px;background:#58585a;"></div>
<div style="position:absolute;left:0.00px;top:638.10px;width:100.00px;height:1.80px;background:#4c4c4e;"></div>
<div style="position:absolute;left:0.00px;top:590.50px;width:100.00px;height:1.60px;background:#dcdcdc;"></div>
<div style="position:absolute;left:0.00px;top:639.50px;width:100.00px;height:48.00px;background:#fff;"></div>
<div style="position:absolute;left:0.00px;top:686.70px;width:100.00px;height:1.20px;background:#cfcfcf;"></div>
<div style="position:absolute;left:0.00px;top:687.50px;width:100.00px;height:48.00px;background:#fff;"></div>
<div style="position:absolute;left:0.00px;top:735.50px;width:100.00px;height:48.00px;background:#fff;"></div>
<div style="position:absolute;left:0.00px;top:736.00px;width:98.00px;height:46.20px;background:#000;"></div>
<div style="position:absolute;left:98.00px;top:736.00px;width:2.00px;height:47.50px;background:#58585a;"></div>
<div style="position:absolute;left:0.00px;top:782.10px;width:100.00px;height:1.80px;background:#4c4c4e;"></div>
<div style="position:absolute;left:0.00px;top:734.50px;width:100.00px;height:1.60px;background:#dcdcdc;"></div>
<div style="position:absolute;left:0.00px;top:783.50px;width:100.00px;height:48.00px;background:#fff;"></div>
<div style="position:absolute;left:0.00px;top:831.50px;width:100.00px;height:48.00px;background:#fff;"></div>
<div style="position:absolute;left:0.00px;top:832.00px;width:98.00px;height:46.20px;background:#000;"></div>
<div style="position:absolute;left:98.00px;top:832.00px;width:2.00px;height:47.50px;background:#58585a;"></div>
<div style="position:absolute;left:0.00px;top:878.10px;width:100.00px;height:1.80px;background:#4c4c4e;"></div>
<div style="position:absolute;left:0.00px;top:830.50px;width:100.00px;height:1.60px;background:#dcdcdc;"></div>
<div style="position:absolute;left:0.00px;top:879.50px;width:100.00px;height:48.00px;background:#fff;"></div>
<div style="position:absolute;left:0.00px;top:926.70px;width:100.00px;height:1.20px;background:#cfcfcf;"></div>
<div style="position:absolute;left:0.00px;top:927.50px;width:100.00px;height:48.00px;background:#fff;"></div>
<div style="position:absolute;left:0.00px;top:975.50px;width:100.00px;height:48.00px;background:#fff;"></div>
<div style="position:absolute;left:0.00px;top:976.00px;width:98.00px;height:46.20px;background:#000;"></div>
<div style="position:absolute;left:98.00px;top:976.00px;width:2.00px;height:47.50px;background:#58585a;"></div>
<div style="position:absolute;left:0.00px;top:1022.10px;width:100.00px;height:1.80px;background:#4c4c4e;"></div>
<div style="position:absolute;left:0.00px;top:974.50px;width:100.00px;height:1.60px;background:#dcdcdc;"></div>
<div style="position:absolute;left:0.00px;top:1023.50px;width:100.00px;height:48.00px;background:#fff;"></div>
<div style="position:absolute;left:0.00px;top:1071.50px;width:100.00px;height:48.00px;background:#fff;"></div>
<div style="position:absolute;left:0.00px;top:1072.00px;width:98.00px;height:46.20px;background:#000;"></div>
<div style="position:absolute;left:98.00px;top:1072.00px;width:2.00px;height:47.50px;background:#58585a;"></div>
<div style="position:absolute;left:0.00px;top:1118.10px;width:100.00px;height:1.80px;background:#4c4c4e;"></div>
<div style="position:absolute;left:0.00px;top:1070.50px;width:100.00px;height:1.60px;background:#dcdcdc;"></div>
<div style="position:absolute;left:0.00px;top:1119.50px;width:100.00px;height:48.00px;background:#fff;"></div>
<div style="position:absolute;top:315.28px;font-size:24px;line-height:24px;color:#7a7a7a;white-space:nowrap;left:-251.30px;width:600px;text-align:center;">C3</div>
<div style="position:absolute;top:891.28px;font-size:24px;line-height:24px;color:#7a7a7a;white-space:nowrap;left:-251.30px;width:600px;text-align:center;">C2</div>
</div>
<div style="position:absolute;left:594.00px;top:1344.00px;width:1219.50px;height:161.00px;background:#161411;"></div>
<div style="position:absolute;top:1372.65px;font-size:20.5px;line-height:20.5px;color:#dededc;white-space:nowrap;left:621.00px;">127</div>
<div style="position:absolute;top:1480.65px;font-size:20.5px;line-height:20.5px;color:#dededc;white-space:nowrap;left:632.00px;">0</div>
<div style="position:absolute;left:594px;top:1344px;width:1219.5px;height:160.5px;overflow:hidden;">
<div class="stem" style="left:79.0px;top:88.6px;height:71.9px"></div>
<div class="stem" style="left:82.8px;top:93.7px;height:66.8px"></div>
<div class="stem" style="left:89.7px;top:79.8px;height:80.7px"></div>
<div class="stem" style="left:104.1px;top:84.3px;height:76.2px"></div>
<div class="stem" style="left:118.9px;top:79.8px;height:80.7px"></div>
<div class="stem" style="left:192.7px;top:84.0px;height:76.5px"></div>
<div class="stem" style="left:196.8px;top:88.6px;height:71.9px"></div>
<div class="stem" style="left:200.5px;top:93.7px;height:66.8px"></div>
<div class="stem" style="left:207.5px;top:79.8px;height:80.7px"></div>
<div class="stem" style="left:222.2px;top:84.3px;height:76.2px"></div>
<div class="stem" style="left:236.9px;top:79.8px;height:80.7px"></div>
<div class="stem" style="left:251.5px;top:75.0px;height:85.5px"></div>
<div class="stem" style="left:310.5px;top:84.0px;height:76.5px"></div>
<div class="stem" style="left:314.5px;top:88.6px;height:71.9px"></div>
<div class="stem" style="left:318.5px;top:93.7px;height:66.8px"></div>
<div class="stem" style="left:325.2px;top:79.8px;height:80.7px"></div>
<div class="stem" style="left:339.9px;top:84.3px;height:76.2px"></div>
<div class="stem" style="left:354.5px;top:79.8px;height:80.7px"></div>
<div class="stem" style="left:428.3px;top:84.0px;height:76.5px"></div>
<div class="stem" style="left:432.3px;top:88.6px;height:71.9px"></div>
<div class="stem" style="left:436.4px;top:93.7px;height:66.8px"></div>
<div class="stem" style="left:487.4px;top:70.9px;height:89.6px"></div>
<div class="stem" style="left:501.9px;top:75.0px;height:85.5px"></div>
<div class="stem" style="left:516.8px;top:79.8px;height:80.7px"></div>
<div class="stem" style="left:546.0px;top:79.0px;height:81.5px"></div>
<div class="stem" style="left:549.8px;top:83.6px;height:76.9px"></div>
<div class="stem" style="left:553.9px;top:88.0px;height:72.5px"></div>
<div class="stem" style="left:558.2px;top:89.4px;height:71.1px"></div>
<div class="stem" style="left:605.4px;top:79.8px;height:80.7px"></div>
<div class="stem" style="left:663.9px;top:79.0px;height:81.5px"></div>
<div class="stem" style="left:667.7px;top:84.0px;height:76.5px"></div>
<div class="stem" style="left:671.8px;top:88.0px;height:72.5px"></div>
<div class="stem" style="left:676.1px;top:89.4px;height:71.1px"></div>
<div class="stem" style="left:723.0px;top:79.8px;height:80.7px"></div>
<div class="stem" style="left:781.7px;top:79.0px;height:81.5px"></div>
<div class="stem" style="left:785.7px;top:84.0px;height:76.5px"></div>
<div class="stem" style="left:789.8px;top:88.0px;height:72.5px"></div>
<div class="stem" style="left:793.8px;top:89.4px;height:71.1px"></div>
<div class="stem" style="left:840.8px;top:74.0px;height:86.5px"></div>
<div class="stem" style="left:844.9px;top:79.0px;height:81.5px"></div>
<div class="stem" style="left:848.9px;top:84.0px;height:76.5px"></div>
<div class="stem" style="left:899.5px;top:74.0px;height:86.5px"></div>
<div class="stem" style="left:903.2px;top:79.0px;height:81.5px"></div>
<div class="stem" style="left:907.3px;top:84.8px;height:75.7px"></div>
<div class="stem" style="left:911.5px;top:79.8px;height:80.7px"></div>
<div class="stem" style="left:1017.5px;top:74.0px;height:86.5px"></div>
<div class="stem" style="left:1021.5px;top:79.0px;height:81.5px"></div>
<div class="stem" style="left:1025.5px;top:84.3px;height:76.2px"></div>
<div class="stem" style="left:1032.5px;top:70.0px;height:90.5px"></div>
<div class="stem" style="left:1047.1px;top:75.0px;height:85.5px"></div>
<div class="stem" style="left:1076.3px;top:70.4px;height:90.1px"></div>
<div class="stem" style="left:1091.0px;top:70.4px;height:90.1px"></div>
<div class="stem" style="left:1106.0px;top:65.3px;height:95.2px"></div>
<div class="stem" style="left:1135.2px;top:74.7px;height:85.8px"></div>
<div class="stem" style="left:1139.0px;top:79.0px;height:81.5px"></div>
<div class="stem" style="left:1143.1px;top:84.8px;height:75.7px"></div>
<div class="stem" style="left:1147.4px;top:79.8px;height:80.7px"></div>
<div class="stem" style="left:1194.1px;top:70.4px;height:90.1px"></div>
<div class="stem" style="left:1208.8px;top:75.0px;height:85.5px"></div>
<div class="head" style="left:73.5px;top:81.6px"></div>
<div class="head" style="left:77.3px;top:86.7px"></div>
<div class="head" style="left:84.2px;top:72.8px"></div>
<div class="head" style="left:98.6px;top:77.3px"></div>
<div class="head" style="left:113.4px;top:72.8px"></div>
<div class="head" style="left:187.2px;top:77.0px"></div>
<div class="head" style="left:191.3px;top:81.6px"></div>
<div class="head" style="left:195.0px;top:86.7px"></div>
<div class="head" style="left:202.0px;top:72.8px"></div>
<div class="head" style="left:216.7px;top:77.3px"></div>
<div class="head" style="left:231.4px;top:72.8px"></div>
<div class="head" style="left:246.0px;top:68.0px"></div>
<div class="head" style="left:305.0px;top:77.0px"></div>
<div class="head" style="left:309.0px;top:81.6px"></div>
<div class="head" style="left:313.0px;top:86.7px"></div>
<div class="head" style="left:319.7px;top:72.8px"></div>
<div class="head" style="left:334.4px;top:77.3px"></div>
<div class="head" style="left:349.0px;top:72.8px"></div>
<div class="head" style="left:422.8px;top:77.0px"></div>
<div class="head" style="left:426.8px;top:81.6px"></div>
<div class="head" style="left:430.9px;top:86.7px"></div>
<div class="head" style="left:481.9px;top:63.9px"></div>
<div class="head" style="left:496.4px;top:68.0px"></div>
<div class="head" style="left:511.3px;top:72.8px"></div>
<div class="head" style="left:540.5px;top:72.0px"></div>
<div class="head" style="left:544.3px;top:76.6px"></div>
<div class="head" style="left:548.4px;top:81.0px"></div>
<div class="head" style="left:552.7px;top:82.4px"></div>
<div class="head" style="left:599.9px;top:72.8px"></div>
<div class="head" style="left:658.4px;top:72.0px"></div>
<div class="head" style="left:662.2px;top:77.0px"></div>
<div class="head" style="left:666.3px;top:81.0px"></div>
<div class="head" style="left:670.6px;top:82.4px"></div>
<div class="head" style="left:717.5px;top:72.8px"></div>
<div class="head" style="left:776.2px;top:72.0px"></div>
<div class="head" style="left:780.2px;top:77.0px"></div>
<div class="head" style="left:784.3px;top:81.0px"></div>
<div class="head" style="left:788.3px;top:82.4px"></div>
<div class="head" style="left:835.3px;top:67.0px"></div>
<div class="head" style="left:839.4px;top:72.0px"></div>
<div class="head" style="left:843.4px;top:77.0px"></div>
<div class="head" style="left:894.0px;top:67.0px"></div>
<div class="head" style="left:897.7px;top:72.0px"></div>
<div class="head" style="left:901.8px;top:77.8px"></div>
<div class="head" style="left:906.0px;top:72.8px"></div>
<div class="head" style="left:1012.0px;top:67.0px"></div>
<div class="head" style="left:1016.0px;top:72.0px"></div>
<div class="head" style="left:1020.0px;top:77.3px"></div>
<div class="head" style="left:1027.0px;top:63.0px"></div>
<div class="head" style="left:1041.6px;top:68.0px"></div>
<div class="head" style="left:1070.8px;top:63.4px"></div>
<div class="head" style="left:1085.5px;top:63.4px"></div>
<div class="head" style="left:1100.5px;top:58.3px"></div>
<div class="head" style="left:1129.7px;top:67.7px"></div>
<div class="head" style="left:1133.5px;top:72.0px"></div>
<div class="head" style="left:1137.6px;top:77.8px"></div>
<div class="head" style="left:1141.9px;top:72.8px"></div>
<div class="head" style="left:1188.6px;top:63.4px"></div>
<div class="head" style="left:1203.3px;top:68.0px"></div>
<div class="head" style="left:1215.0px;top:72.0px"></div>
</div>
<div style="position:absolute;left:90.00px;top:1504.30px;width:1724.00px;height:1.50px;background:#232220;"></div>
<svg style="position:absolute;left:125.05px;top:1533.25px" width="33.5" height="33.5" viewBox="0 0 24 24" fill="none" stroke="#e6e6e4" stroke-width="1.7" stroke-linecap="round" stroke-linejoin="round"><path d="M12.22 2h-.44a2 2 0 0 0-2 2v.18a2 2 0 0 1-1 1.73l-.43.25a2 2 0 0 1-2 0l-.15-.08a2 2 0 0 0-2.73.73l-.22.38a2 2 0 0 0 .73 2.73l.15.1a2 2 0 0 1 1 1.72v.51a2 2 0 0 1-1 1.74l-.15.09a2 2 0 0 0-.73 2.73l.22.38a2 2 0 0 0 2.73.73l.15-.08a2 2 0 0 1 2 0l.43.25a2 2 0 0 1 1 1.73V20a2 2 0 0 0 2 2h.44a2 2 0 0 0 2-2v-.18a2 2 0 0 1 1-1.73l.43-.25a2 2 0 0 1 2 0l.15.08a2 2 0 0 0 2.73-.73l.22-.39a2 2 0 0 0-.73-2.73l-.15-.08a2 2 0 0 1-1-1.74v-.5a2 2 0 0 1 1-1.74l.15-.09a2 2 0 0 0 .73-2.73l-.22-.38a2 2 0 0 0-2.73-.73l-.15.08a2 2 0 0 1-2 0l-.43-.25a2 2 0 0 1-1-1.73V4a2 2 0 0 0-2-2z"/><circle cx="12" cy="12" r="3"/></svg>
<svg style="position:absolute;left:197.50px;top:1533.50px" width="33" height="33" viewBox="0 0 24 24" fill="none" stroke="#e6e6e4" stroke-width="1.7" stroke-linecap="round" stroke-linejoin="round"><path d="M10 8h.01M12 12h.01M14 8h.01M16 12h.01M18 8h.01M6 8h.01M7 16h10M8 12h.01"/><rect width="20" height="16" x="2" y="4" rx="2"/></svg>
<svg style="position:absolute;left:269.50px;top:1533.00px" width="33" height="33" viewBox="0 0 24 24" fill="none" stroke="#e6e6e4" stroke-width="1.7" stroke-linecap="round" stroke-linejoin="round"><path d="M21 15v4a2 2 0 0 1-2 2H5a2 2 0 0 1-2-2v-4"/><polyline points="7 10 12 15 17 10"/><line x1="12" x2="12" y1="15" y2="3"/></svg>
<svg style="position:absolute;left:1529.00px;top:1534.00px" width="32" height="32" viewBox="0 0 24 24" fill="none" stroke="#e6e6e4" stroke-width="1.8" stroke-linecap="round" stroke-linejoin="round"><circle cx="11" cy="11" r="8"/><line x1="21" x2="16.65" y1="21" y2="16.65"/><line x1="11" x2="11" y1="8" y2="14"/><line x1="8" x2="14" y1="11" y2="11"/></svg>
<svg style="position:absolute;left:1601.00px;top:1534.00px" width="32" height="32" viewBox="0 0 24 24" fill="none" stroke="#e6e6e4" stroke-width="1.8" stroke-linecap="round" stroke-linejoin="round"><circle cx="11" cy="11" r="8"/><line x1="21" x2="16.65" y1="21" y2="16.65"/><line x1="8" x2="14" y1="11" y2="11"/></svg>
<svg style="position:absolute;left:1672.40px;top:1533.30px" width="32" height="32" viewBox="0 0 24 24" fill="none" stroke="#e6e6e4" stroke-width="1.8" stroke-linecap="round" stroke-linejoin="round"><path d="M3 12a9 9 0 1 0 9-9 9.75 9.75 0 0 0-6.74 2.74L3 8"/><path d="M3 3v5h5"/></svg>
<svg style="position:absolute;left:1744.80px;top:1533.30px" width="32" height="32" viewBox="0 0 24 24" fill="none" stroke="#e6e6e4" stroke-width="1.8" stroke-linecap="round" stroke-linejoin="round"><path d="M21 12a9 9 0 1 1-9-9c2.52 0 4.93 1 6.74 2.74L21 8"/><path d="M21 3v5h-5"/></svg>
<div style="position:absolute;left:1813.50px;top:51.00px;width:1.50px;height:1531.00px;background:#2a2927;"></div>
<div style="position:absolute;left:1815.00px;top:153.50px;width:737.00px;height:1.50px;background:#222120;"></div>
<div style="position:absolute;top:88.91px;font-size:28.7px;line-height:28.7px;color:#e6e6e4;white-space:nowrap;left:1848.00px;">Progressive rock track</div>
<svg style="position:absolute;left:2413.30px;top:85.90px" width="33" height="33" viewBox="0 0 24 24" fill="none" stroke="#e6e6e4" stroke-width="1.85" stroke-linecap="round" stroke-linejoin="round"><path d="M5 12h14M12 5v14"/></svg>
<svg style="position:absolute;left:2485.50px;top:85.50px" width="33" height="33" viewBox="0 0 24 24" fill="none" stroke="#e6e6e4" stroke-width="1.85" stroke-linecap="round" stroke-linejoin="round"><path d="M3 12a9 9 0 1 0 9-9 9.75 9.75 0 0 0-6.74 2.74L3 8"/><path d="M3 3v5h5"/><path d="M12 7v5l4 2"/></svg>
<div style="position:absolute;top:170.80px;font-size:28px;line-height:28px;color:#9b9b99;white-space:nowrap;left:1864.30px;"><span style="color:#9b9b99">&gt;</span><span style="display:inline-block;width:5.5px"></span><span style="font-weight:bold;color:#ececea;letter-spacing:-0.65px">Creating track:</span><span style="display:inline-block;width:1.8px"></span> <span style="color:#9b9b99;letter-spacing:0px">Bass</span></div>
<div style="position:absolute;top:232.90px;font-size:28px;line-height:28px;color:#9b9b99;white-space:nowrap;letter-spacing:0.27px;left:1864.30px;">Thought for a bit</div>
<div style="position:absolute;top:294.10px;font-size:28px;line-height:28px;color:#9b9b99;white-space:nowrap;left:1864.30px;"><span style="color:#9b9b99">&gt;</span><span style="display:inline-block;width:5.5px"></span><span style="font-weight:bold;color:#ececea;letter-spacing:-0.65px">Creating track:</span><span style="display:inline-block;width:1.8px"></span> <span style="color:#9b9b99;letter-spacing:0px">Drums</span></div>
<div style="position:absolute;top:355.90px;font-size:28px;line-height:28px;color:#9b9b99;white-space:nowrap;letter-spacing:0.27px;left:1864.30px;">Thought for a bit</div>
<div style="position:absolute;top:417.40px;font-size:28px;line-height:28px;color:#9b9b99;white-space:nowrap;left:1864.30px;"><span style="color:#9b9b99">&gt;</span><span style="display:inline-block;width:5.5px"></span><span style="font-weight:bold;color:#ececea;letter-spacing:-0.65px">Instrument</span><span style="display:inline-block;width:1.8px"></span> <span style="color:#9b9b99;letter-spacing:0px">RetroBass</span></div>
<div style="position:absolute;top:479.00px;font-size:28px;line-height:28px;color:#9b9b99;white-space:nowrap;letter-spacing:0.27px;left:1864.30px;">Thought for a bit</div>
<div style="position:absolute;top:540.50px;font-size:28px;line-height:28px;color:#9b9b99;white-space:nowrap;left:1864.30px;"><span style="color:#9b9b99">&gt;</span><span style="display:inline-block;width:5.5px"></span><span style="font-weight:bold;color:#ececea;letter-spacing:-0.65px">Instrument</span><span style="display:inline-block;width:1.8px"></span> <span style="color:#9b9b99;letter-spacing:0.3px">AcousticDrumKit</span></div>
<div style="position:absolute;top:602.00px;font-size:28px;line-height:28px;color:#9b9b99;white-space:nowrap;letter-spacing:0.27px;left:1864.30px;">Thought for a bit</div>
<div style="position:absolute;left:1863.5px;top:662.5px;width:636px;height:163px;border:1.5px solid #2b2a28;border-radius:15px;background:#11100e;"></div><div style="position:absolute;top:684.91px;font-size:23.5px;line-height:23.5px;color:#dcdcda;white-space:nowrap;left:1886.00px;">Track 1</div><div style="position:absolute;top:684.91px;font-size:23.5px;line-height:23.5px;color:#dcdcda;white-space:nowrap;letter-spacing:-1.3px;left:1985.20px;">+116</div><div style="position:absolute;top:684.91px;font-size:23.5px;line-height:23.5px;color:#ea7069;white-space:nowrap;letter-spacing:2.6px;left:2048.60px;">-0</div><div style="position:absolute;top:735.00px;font-size:28px;line-height:28px;color:#e2e2e0;white-space:nowrap;letter-spacing:0.2px;left:1886.00px;">Compose a 16-bar progressive rock keyboard</div><div style="position:absolute;top:775.00px;font-size:28px;line-height:28px;color:#e2e2e0;white-space:nowrap;letter-spacing:0.2px;left:1886.00px;">part in the style of Genesis.</div>
<div style="position:absolute;top:859.10px;font-size:28px;line-height:28px;color:#9b9b99;white-space:nowrap;letter-spacing:0.27px;left:1864.30px;">Thought for a bit</div>
<div style="position:absolute;left:1863.5px;top:920.4px;width:636px;height:163px;border:1.5px solid #2b2a28;border-radius:15px;background:#11100e;"></div><div style="position:absolute;top:942.81px;font-size:23.5px;line-height:23.5px;color:#dcdcda;white-space:nowrap;left:1886.00px;">Bass</div><div style="position:absolute;top:942.81px;font-size:23.5px;line-height:23.5px;color:#dcdcda;white-space:nowrap;letter-spacing:0px;left:1962.40px;">+106</div><div style="position:absolute;top:942.81px;font-size:23.5px;line-height:23.5px;color:#ea7069;white-space:nowrap;letter-spacing:2.6px;left:2032.80px;">-0</div><div style="position:absolute;top:992.90px;font-size:28px;line-height:28px;color:#e2e2e0;white-space:nowrap;letter-spacing:0.2px;left:1886.00px;">Compose a 16-bar melodic progressive rock</div><div style="position:absolute;top:1032.90px;font-size:28px;line-height:28px;color:#e2e2e0;white-space:nowrap;letter-spacing:0.2px;left:1886.00px;">bass line.</div>
<div style="position:absolute;top:1116.90px;font-size:28px;line-height:28px;color:#9b9b99;white-space:nowrap;letter-spacing:0.27px;left:1864.30px;">Thought for a bit</div>
<div style="position:absolute;left:1850px;top:1172.5px;width:680px;height:160.5px;overflow:hidden;"><div style="position:absolute;left:13.5px;top:5px;width:636px;height:163px;border:1.5px solid #2b2a28;border-radius:15px;background:#11100e;"></div></div><div style="position:absolute;top:1199.91px;font-size:23.5px;line-height:23.5px;color:#dcdcda;white-space:nowrap;left:1886.00px;">Drums</div><div style="position:absolute;top:1199.91px;font-size:23.5px;line-height:23.5px;color:#dcdcda;white-space:nowrap;letter-spacing:0px;left:1979.90px;">+186</div><div style="position:absolute;top:1199.91px;font-size:23.5px;line-height:23.5px;color:#ea7069;white-space:nowrap;letter-spacing:2.6px;left:2049.10px;">-0</div><div style="position:absolute;top:1250.00px;font-size:28px;line-height:28px;color:#e2e2e0;white-space:nowrap;letter-spacing:0.2px;left:1886.00px;">Compose a 16-bar progressive rock drum</div><div style="position:absolute;top:1290.00px;font-size:28px;line-height:28px;color:#e2e2e0;white-space:nowrap;letter-spacing:0.2px;left:1886.00px;">pattern.</div>
<div style="position:absolute;left:2538.00px;top:393.00px;width:12.00px;height:430.00px;background:#3b3a37;border-radius:6px;"></div>
<div style="position:absolute;left:1847.50px;top:1365.50px;width:674.50px;height:196.30px;background:#1a1917;border:1.5px solid #2a2927;border-radius:17px;"></div>
<div style="position:absolute;top:1393.60px;font-size:28px;line-height:28px;color:#8e8e8c;white-space:nowrap;letter-spacing:0.0px;left:1870.00px;">Compose MIDI, explore theory, discover new</div>
<div style="position:absolute;top:1433.40px;font-size:28px;line-height:28px;color:#8e8e8c;white-space:nowrap;letter-spacing:0.0px;left:1870.00px;">ideas<span style="letter-spacing:-2.3px">...</span></div>
<div style="position:absolute;top:1501.08px;font-size:24px;line-height:24px;color:#dcdcda;white-space:nowrap;left:1876.00px;">Gemini 3 Flash</div>
<svg style="position:absolute;left:2057.90px;top:1501.50px" width="26" height="26" viewBox="0 0 24 24" fill="none" stroke="#c8c8c6" stroke-width="1.7" stroke-linecap="round" stroke-linejoin="round"><path d="m6 9 6 6 6-6"/></svg>
<div style="position:absolute;left:2432.30px;top:1488.00px;width:67.20px;height:52.00px;background:#1b1a18;border:1.5px solid #262523;border-radius:14px;"></div>
<svg style="position:absolute;left:2449.50px;top:1497.40px" width="33" height="33" viewBox="0 0 24 24" fill="none" stroke="#868684" stroke-width="1.9" stroke-linecap="round" stroke-linejoin="round"><path d="m5 12 7-7 7 7"/><path d="M12 19V5"/></svg>
<div style="position:absolute;left:2540.00px;top:51.00px;width:14.30px;height:1531.00px;border-right:2.3px solid #42413e;border-bottom-right-radius:13px;"></div>
<div style="position:absolute;left:2554.00px;top:51.00px;width:2.00px;height:1531.00px;background:#0e0d0c;"></div>
</div></body></html>
